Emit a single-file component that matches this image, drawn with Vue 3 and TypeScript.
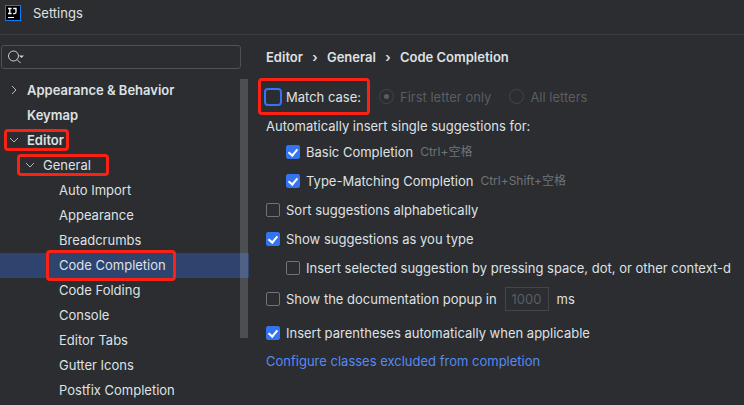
<script setup lang="ts">
import { ref } from 'vue'

interface TreeNode {
  label: string
  level: number
  bold?: boolean
  arrow?: 'open' | 'closed'
  mark?: string
}

const nodes: TreeNode[] = [
  { label: 'Appearance & Behavior', level: 0, bold: true, arrow: 'closed' },
  { label: 'Keymap', level: 0, bold: true },
  { label: 'Editor', level: 0, bold: true, arrow: 'open', mark: 'mark-editor' },
  { label: 'General', level: 1, arrow: 'open', mark: 'mark-general' },
  { label: 'Auto Import', level: 2 },
  { label: 'Appearance', level: 2 },
  { label: 'Breadcrumbs', level: 2 },
  { label: 'Code Completion', level: 2, mark: 'mark-completion' },
  { label: 'Code Folding', level: 2 },
  { label: 'Console', level: 2 },
  { label: 'Editor Tabs', level: 2 },
  { label: 'Gutter Icons', level: 2 },
  { label: 'Postfix Completion', level: 2 },
]

const selected = ref('Code Completion')
const query = ref('')
const matchCase = ref(false)
const matchMode = ref('first')
const basic = ref(true)
const typeMatching = ref(true)
const sortAlpha = ref(false)
const showAsType = ref(true)
const insertSelected = ref(false)
const showDoc = ref(false)
const delay = ref('1000')
const parens = ref(true)
</script>

<template>
  <div class="dialog">
    <header class="titlebar">
      <svg class="logo" viewBox="0 0 16 16" aria-hidden="true">
        <rect width="16" height="16" fill="#087cfa" />
        <rect x="1" y="1" width="14" height="14" fill="#000" />
        <path d="M3 3.5h3.6M3 8.5h3.6M4.8 3.5v5M8.2 3.5h2.8v3.6q0 1.5-1.4 1.5h-1.5" fill="none" stroke="#fff" stroke-width="1.3" />
        <path d="M3 12h6v1H3z" fill="#fff" />
      </svg>
      <span>Settings</span>
    </header>
    <div class="body">
      <aside class="sidebar">
        <div class="search">
          <svg class="search-icon" viewBox="0 0 18 16" aria-hidden="true">
            <circle cx="6.5" cy="7" r="5" fill="none" stroke="#ced0d6" />
            <path d="M10 10.500l3.600 3.600" stroke="#ced0d6" fill="none" />
            <path d="M12 6.500h5l-2.500 2.500z" fill="#ced0d6" />
          </svg>
          <input v-model="query" type="text" aria-label="Search settings" />
        </div>
        <nav class="tree" aria-label="Settings categories">
          <button
            v-for="node in nodes"
            :key="node.label"
            type="button"
            class="node"
            :class="['level-' + node.level, { bold: node.bold, selected: selected === node.label }]"
            @click="selected = node.label"
          >
            <span class="arrow">
              <svg v-if="node.arrow" viewBox="0 0 16 16" aria-hidden="true">
                <path :d="node.arrow === 'open' ? 'M4 6l4 4 4-4' : 'M6 4l4 4-4 4'" fill="none" stroke="#b4b8bf" />
              </svg>
            </span>
            <span>{{ node.label }}</span>
            <i v-if="node.mark" class="mark" :class="node.mark"></i>
          </button>
          <div class="scrollbar"></div>
        </nav>
      </aside>
      <main class="content">
        <nav class="crumbs" aria-label="Breadcrumb">
          <span>Editor</span><span class="sep">›</span><span>General</span><span class="sep">›</span><span>Code Completion</span>
        </nav>
        <div class="row match-row">
          <label class="match"><input v-model="matchCase" class="check focus" type="checkbox" />Match case:<i class="mark mark-match"></i></label>
          <label class="off"><input v-model="matchMode" class="radio" type="radio" name="mode" value="first" disabled />First letter only</label>
          <label class="off"><input v-model="matchMode" class="radio" type="radio" name="mode" value="all" disabled />All letters</label>
        </div>
        <div class="row heading">Automatically insert single suggestions for:</div>
        <div class="row indent">
          <label><input v-model="basic" class="check" type="checkbox" />Basic Completion</label>
          <span class="hint">Ctrl+空格</span>
        </div>
        <div class="row indent">
          <label><input v-model="typeMatching" class="check" type="checkbox" />Type-Matching Completion</label>
          <span class="hint">Ctrl+Shift+空格</span>
        </div>
        <div class="row">
          <label><input v-model="sortAlpha" class="check" type="checkbox" />Sort suggestions alphabetically</label>
        </div>
        <div class="row">
          <label><input v-model="showAsType" class="check" type="checkbox" />Show suggestions as you type</label>
        </div>
        <div class="row indent">
          <label><input v-model="insertSelected" class="check" type="checkbox" />Insert selected suggestion by pressing space, dot, or other context-d</label>
        </div>
        <div class="row tall">
          <label><input v-model="showDoc" class="check" type="checkbox" />Show the documentation popup in</label>
          <input v-model="delay" class="delay" type="text" aria-label="Delay in milliseconds" disabled />
          <span>ms</span>
        </div>
        <div class="row tall">
          <label><input v-model="parens" class="check" type="checkbox" />Insert parentheses automatically when applicable</label>
        </div>
        <div class="row link-row"><a href="#">Configure classes excluded from completion</a></div>
      </main>
    </div>
  </div>
</template>

<style>
body {
  background: #2b2d30;
}
</style>

<style scoped>
.dialog {
  height: 100vh;
  display: flex;
  flex-direction: column;
  overflow: hidden;
  background: #2b2d30;
  color: #dfe1e5;
  font: 13px/16px Inter, "Noto Sans CJK SC", sans-serif;
  white-space: nowrap;
}
.dialog *,
.dialog {
  box-sizing: border-box;
}
.titlebar {
  flex: none;
  display: flex;
  align-items: center;
  gap: 12px;
  height: 35px;
  padding: 0 5px 8px;
  border-bottom: 1px solid #393b40;
}
.logo {
  width: 16px;
  height: 16px;
}
.body {
  flex: 1;
  min-height: 0;
  display: flex;
}
.sidebar {
  flex: none;
  width: 249px;
  padding-top: 10px;
}
.search {
  display: flex;
  align-items: center;
  height: 24px;
  margin: 0 8px 9px 1px;
  padding-left: 5px;
  border: 1px solid #4e5157;
  border-radius: 3px;
}
.search-icon {
  flex: none;
  width: 18px;
  height: 16px;
}
.search input {
  flex: 1;
  min-width: 0;
  border: 0;
  outline: 0;
  background: none;
  color: inherit;
  font: inherit;
}
.tree {
  position: relative;
}
.node {
  position: relative;
  display: flex;
  align-items: center;
  gap: 5px;
  width: 100%;
  height: 25px;
  padding: 0 0 2px 6px;
  border: 0;
  background: none;
  color: inherit;
  font: inherit;
  text-align: left;
}
.level-1 {
  padding-left: 22px;
}
.level-2 {
  padding-left: 38px;
}
.bold {
  font-weight: 600;
}
.selected {
  background: #2e436e;
}
.arrow {
  width: 16px;
  height: 16px;
}
.arrow svg {
  display: block;
}
.scrollbar {
  position: absolute;
  top: 1px;
  right: 1px;
  width: 8px;
  height: 259px;
  background: rgba(255, 255, 255, 0.16);
}
.mark {
  position: absolute;
  border: 3px solid #fb2113;
  border-radius: 4px;
  pointer-events: none;
}
.mark-editor {
  left: 4px;
  top: 1px;
  width: 65px;
  height: 22px;
}
.mark-general {
  left: 17px;
  top: 1px;
  width: 92px;
  height: 22px;
}
.mark-completion {
  z-index: 1;
  left: 46px;
  top: -3px;
  width: 130px;
  height: 31px;
}
.mark-match {
  left: -6px;
  top: -10px;
  width: 112px;
  height: 37px;
}
.content {
  flex: 1;
  min-width: 0;
  overflow: hidden;
  padding: 9px 0 0 17px;
}
.crumbs {
  display: flex;
  align-items: center;
  height: 25px;
  margin-bottom: 10px;
  font-weight: 600;
}
.sep {
  width: 24px;
  text-align: center;
}
.row {
  display: flex;
  align-items: center;
  height: 29px;
}
.row label {
  display: flex;
  align-items: center;
  gap: 6px;
}
.row.match-row {
  height: 35px;
  gap: 18px;
}
.row .match {
  position: relative;
  gap: 4px;
  margin-left: -2px;
}
.row .off {
  color: #5a5d63;
}
.row.heading {
  height: 23px;
}
.indent {
  padding-left: 20px;
}
.row.tall {
  height: 34px;
  gap: 8px;
}
.row.link-row {
  height: 22px;
}
.hint {
  margin-left: 7px;
  color: #6f737a;
  font-size: 12px;
}
.check {
  flex: none;
  appearance: none;
  width: 14px;
  height: 14px;
  margin: 0;
  border: 1px solid #6f737a;
  border-radius: 2px;
}
.check:checked {
  border-color: #3574f0;
  background: #3574f0;
}
.check:checked::before {
  content: "";
  display: block;
  box-sizing: border-box;
  width: 6px;
  height: 9px;
  margin: 1px 0 0 3px;
  border: solid #fff;
  border-width: 0 2px 2px 0;
  transform: rotate(40deg);
}
.focus {
  width: 18px;
  height: 18px;
  border: 2px solid #3574f0;
  border-radius: 4px;
}
.radio {
  appearance: none;
  display: grid;
  place-items: center;
  width: 15px;
  height: 15px;
  margin: 0;
  border: 1px solid #43454a;
  border-radius: 50%;
}
.radio:checked::before {
  content: "";
  width: 5px;
  height: 5px;
  border-radius: 50%;
  background: #5a5d63;
}
.delay {
  width: 44px;
  height: 24px;
  padding: 0 6px;
  border: 1px solid #43454a;
  background: none;
  color: #5a5d63;
  font: inherit;
}
a {
  color: #548af7;
  text-decoration: none;
}
</style>
